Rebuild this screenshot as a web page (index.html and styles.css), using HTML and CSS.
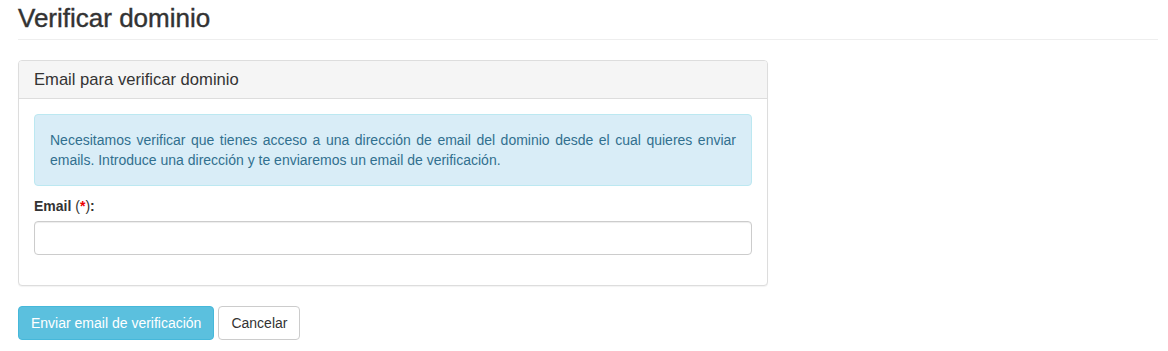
FILE: index.html
```html
<!DOCTYPE html>
<html lang="es">
<head>
  <meta charset="UTF-8">
  <title>Verificar dominio</title>
  <link rel="stylesheet" href="styles.css">
</head>
<body>
<div class="page">
  <div class="page-header">
    <h1>Verificar dominio</h1>
  </div>

  <form class="verify-form" action="#">
    <div class="panel">
      <div class="panel-heading">Email para verificar dominio</div>
      <div class="panel-body">
        <div class="alert-info">
          Necesitamos verificar que tienes acceso a una dirección de email del dominio desde el cual quieres enviar emails. Introduce una dirección y te enviaremos un email de verificación.
        </div>
        <div class="form-group">
          <label for="email">Email <span class="required">(<em>*</em>)</span>:</label>
          <input type="email" id="email" class="form-control">
        </div>
      </div>
    </div>

    <div class="actions">
      <button type="submit" class="btn btn-info">Enviar email de verificación</button>
      <button type="button" class="btn btn-default">Cancelar</button>
    </div>
  </form>
</div>
</body>
</html>
```

FILE: styles.css
```css
* {
  box-sizing: border-box;
}
body {
  margin: 0;
  background: #fff;
  color: #333;
  font-family: "Liberation Sans", Arial, sans-serif;
  font-size: 14px;
  line-height: 20px;
}
.page {
  padding: 0 10px 0 18px;
}
.page-header {
  padding-top: 4px;
  padding-bottom: 7px;
  margin-bottom: 20px;
  border-bottom: 1px solid #eee;
}
.page-header h1 {
  margin: 0;
  font-size: 26px;
  line-height: 28px;
  font-weight: 500;
  color: #333;
  -webkit-text-stroke: 0.4px #333;
}
.panel {
  width: 750px;
  margin-bottom: 20px;
  border: 1px solid #ddd;
  border-radius: 4px;
  background: #fff;
  box-shadow: 0 1px 1px rgba(0, 0, 0, .05);
}
.panel-heading {
  padding: 10px 15px;
  font-size: 16.6px;
  line-height: 17px;
  color: #333;
  background: #f5f5f5;
  border-bottom: 1px solid #ddd;
  border-radius: 3px 3px 0 0;
}
.panel-body {
  padding: 15px;
}
.alert-info {
  padding: 15px;
  margin-bottom: 10px;
  color: #31708f;
  background: #d9edf7;
  border: 1px solid #bce8f1;
  border-radius: 4px;
  text-align: justify;
}
.form-group {
  margin-bottom: 15px;
}
label {
  display: block;
  margin-bottom: 5px;
  font-weight: bold;
}
.required {
  font-weight: normal;
}
.required em {
  font-style: normal;
  font-weight: bold;
  color: #e00;
}
.form-control {
  display: block;
  width: 100%;
  height: 34px;
  padding: 6px 12px;
  font: inherit;
  color: #555;
  background: #fff;
  border: 1px solid #ccc;
  border-radius: 4px;
  box-shadow: inset 0 1px 1px rgba(0, 0, 0, .075);
}
.actions {
  display: flex;
  gap: 4px;
}
.btn {
  height: 34px;
  padding: 6px 12px;
  font: inherit;
  line-height: 20px;
  border: 1px solid transparent;
  border-radius: 4px;
  cursor: pointer;
}
.btn-info {
  color: #fff;
  background: #5bc0de;
  border-color: #46b8da;
}
.btn-default {
  color: #333;
  background: #fff;
  border-color: #ccc;
}
```
